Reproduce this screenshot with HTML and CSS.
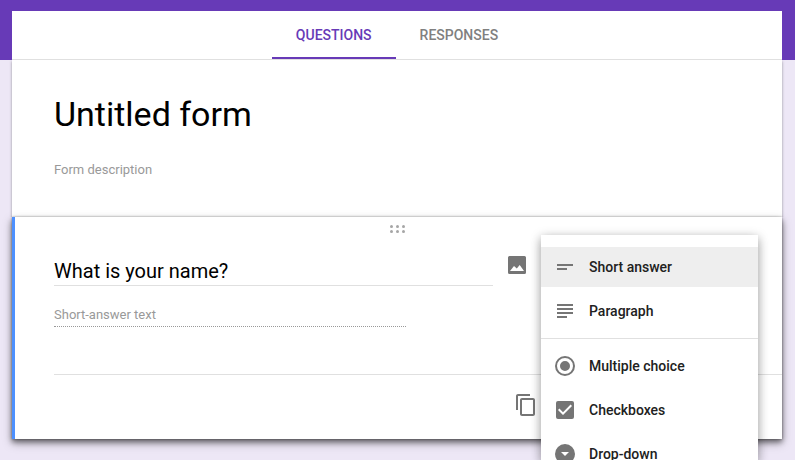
FILE: index.html
```html
<!DOCTYPE html>
<html lang="en">
<head>
<meta charset="utf-8">
<title>Untitled form</title>
<link rel="stylesheet" href="styles.css">
</head>
<body>
<main class="page">
  <nav class="tabs">
    <a class="tab tab-active"><span class="tab-label">QUESTIONS</span></a>
    <a class="tab"><span class="tab-label">RESPONSES</span></a>
  </nav>
  <section class="intro">
    <h1 class="form-title">Untitled form</h1>
    <p class="form-description">Form description</p>
  </section>
  <section class="question">
    <svg class="drag" width="15" height="8" viewBox="0 0 15 8" fill="#a6a6a6">
      <circle cx="1.5" cy="1.5" r="1.5"/><circle cx="7.5" cy="1.5" r="1.5"/><circle cx="13.5" cy="1.5" r="1.5"/>
      <circle cx="1.5" cy="6.5" r="1.5"/><circle cx="7.5" cy="6.5" r="1.5"/><circle cx="13.5" cy="6.5" r="1.5"/>
    </svg>
    <div class="question-row">
      <div class="question-title">What is your name?</div>
      <svg class="icon image-icon" viewBox="0 0 24 24"><path fill-rule="evenodd" d="M4.500 3h15A1.500 1.500 0 0 1 21 4.500v15a1.500 1.500 0 0 1-1.500 1.500h-15A1.500 1.500 0 0 1 3 19.500v-15A1.500 1.500 0 0 1 4.500 3zM5 18h14l-4.300-6-2.900 3.400L9 13z"/></svg>
    </div>
    <div class="answer">Short-answer text</div>
    <footer class="actions">
      <svg class="icon" viewBox="0 0 24 24"><path d="M16 1H4c-1.100 0-2 .9-2 2v14h2V3h12V1zm3 4H8c-1.100 0-2 .9-2 2v14c0 1.100.9 2 2 2h11c1.100 0 2-.9 2-2V7c0-1.100-.9-2-2-2zm0 16H8V7h11v14z"/></svg>
    </footer>
    <div class="menu">
      <div class="item item-selected">
        <svg class="icon" viewBox="0 0 24 24"><path d="M4 9h16v2H4zM4 13h10v2H4z"/></svg>
        <span>Short answer</span>
      </div>
      <div class="item">
        <svg class="icon" viewBox="0 0 24 24"><path d="M4 5h16v2H4zM4 9h16v2H4zM4 13h16v2H4zM4 17h10v2H4z"/></svg>
        <span>Paragraph</span>
      </div>
      <div class="separator"></div>
      <div class="item">
        <svg class="icon" viewBox="0 0 24 24"><path d="M12 7a5 5 0 1 0 0 10 5 5 0 0 0 0-10zm0-5a10 10 0 1 0 0 20 10 10 0 0 0 0-20zm0 18a8 8 0 1 1 0-16 8 8 0 0 1 0 16z"/></svg>
        <span>Multiple choice</span>
      </div>
      <div class="item">
        <svg class="icon" viewBox="0 0 24 24"><path d="M19 3H5a2 2 0 0 0-2 2v14a2 2 0 0 0 2 2h14a2 2 0 0 0 2-2V5a2 2 0 0 0-2-2zm-9 14l-5-5 1.410-1.410L10 14.170l7.590-7.590L19 8l-9 9z"/></svg>
        <span>Checkboxes</span>
      </div>
      <div class="item">
        <svg class="icon" viewBox="0 0 24 24"><path d="M12 2a10 10 0 1 0 0 20 10 10 0 0 0 0-20zm0 12l-4-4h8z"/></svg>
        <span>Drop-down</span>
      </div>
    </div>
  </section>
</main>
</body>
</html>
```
FILE: styles.css
```css
* { box-sizing: border-box; }
html { height: 100%; overflow: hidden; }
body {
  margin: 0;
  height: 460px;
  overflow: hidden;
  padding: 11px 13px 0 12px;
  background: linear-gradient(#673ab7 60px, #ede7f6 60px);
  font-family: Roboto, "Liberation Sans", sans-serif;
}
.tabs {
  display: flex;
  justify-content: center;
  height: 49px;
  background: #fff;
  border-bottom: 1px solid #e0e0e0;
}
.tab {
  height: 48px;
  padding: 0 24px;
  color: #808080;
  font-size: 14px;
  font-weight: 500;
  line-height: 48px;
}
.tab-active { color: #673ab7; border-bottom: 2px solid #673ab7; }
.tab-label { display: block; white-space: nowrap; }
.intro {
  height: 157px;
  padding: 30px 42px 0;
  background: #fff;
  box-shadow: 0 2px 2px rgba(0, 0, 0, .14), 0 1px 3px rgba(0, 0, 0, .25);
  clip-path: inset(0 -8px 0 -8px);
}
.form-title { margin: 0; font-size: 34px; font-weight: 400; line-height: 48px; }
.form-description { margin: 22px 0 0; font-size: 13px; line-height: 20px; color: #999; }
.question {
  position: relative;
  height: 222px;
  padding: 8px 0 0 39px;
  background: #fff;
  border-left: 3px solid #4d90fe;
  box-shadow: 0 3px 5px rgba(0, 0, 0, .4), 0 4px 9px rgba(0, 0, 0, .35), 0 0 2px rgba(0, 0, 0, .35);
}
.drag { display: block; margin-left: 336px; }
.question-row { display: flex; gap: 12px; margin-top: 20px; }
.question-title {
  width: 439px;
  height: 33px;
  border-bottom: 1px solid #e0e0e0;
  font-size: 20px;
  line-height: 36px;
}
.icon { display: block; flex: none; width: 24px; height: 24px; fill: #757575; }
.answer {
  width: 352px;
  height: 24px;
  margin-top: 17px;
  border-bottom: 1px dotted #999;
  color: #999;
  font-size: 13px;
  line-height: 23px;
}
.actions {
  display: flex;
  margin-top: 47px;
  padding: 18px 0 0 460px;
  border-top: 1px solid #e0e0e0;
}
.menu {
  position: absolute;
  top: 18px;
  left: 526px;
  width: 217px;
  height: 225px;
  overflow: hidden;
  padding: 12px 0;
  background: #fff;
  box-shadow: 0 2px 10px rgba(0, 0, 0, .26), 0 5px 10px rgba(0, 0, 0, .18);
}
.item {
  display: flex;
  align-items: center;
  gap: 12px;
  height: 40px;
  margin-bottom: 4px;
  padding-left: 12px;
  color: #212121;
  font-size: 14px;
  font-weight: 500;
}
.item-selected { background: #eee; }
.separator { height: 1px; margin: 7px 0; background: #e0e0e0; }
```
